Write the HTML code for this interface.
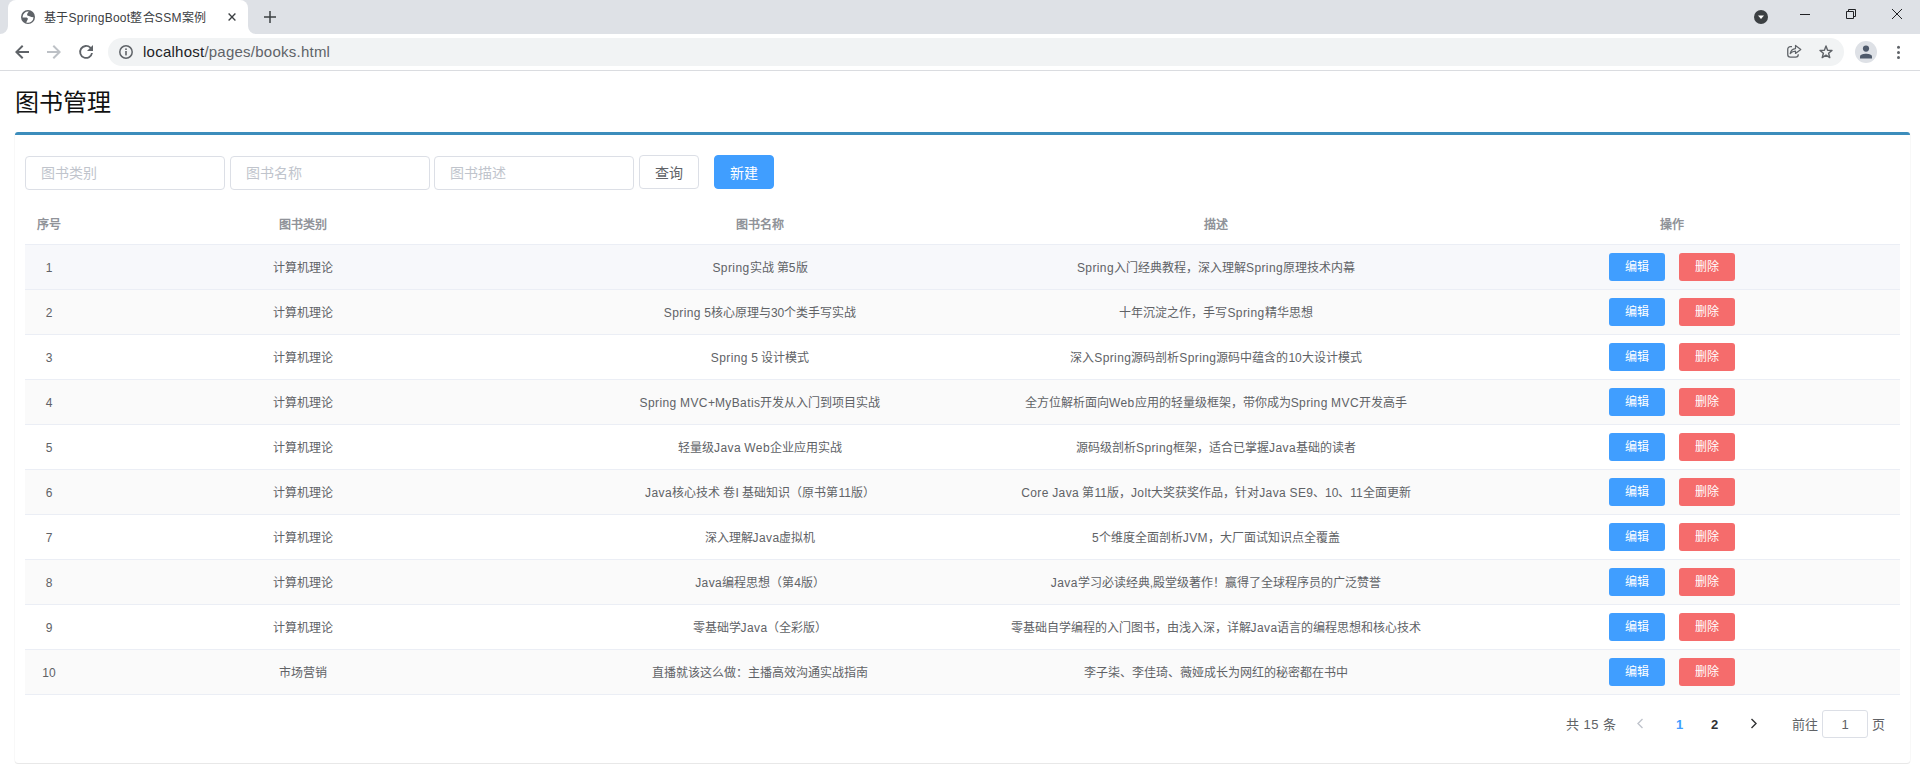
<!DOCTYPE html>
<html lang="zh-CN"><head><meta charset="utf-8">
<style>
*{box-sizing:border-box;margin:0;padding:0}
html,body{width:1920px;height:764px;overflow:hidden;background:#fff;font-family:"Liberation Sans",sans-serif;position:relative}
.abs{position:absolute}
#tabstrip{left:0;top:0;width:1920px;height:34px;background:#dee1e6}
#tab{left:8px;top:0;width:240px;height:34px;background:#fff;border-radius:8px 8px 0 0}
#tabtitle{left:44px;top:10px;font-size:12px;line-height:16px;color:#3c4043;white-space:nowrap;letter-spacing:.25px}
#toolbar{left:0;top:34px;width:1920px;height:36px;background:#fff}
#tbline{left:0;top:70px;width:1920px;height:1px;background:#dadce0}
#omni{left:108px;top:38px;width:1736px;height:28px;background:#f1f3f4;border-radius:14px}
#url{left:143px;top:43px;font-size:15px;line-height:18px;color:#202124;white-space:nowrap;letter-spacing:.24px}
#url span{color:#5f6368}
svg{position:absolute;overflow:visible}

#h1{left:15px;top:87px;font-size:24px;line-height:32px;color:#111;white-space:nowrap}
#box{left:15px;top:132px;width:1895px;height:631px;background:#fff;border-top:3px solid #3c8dbc;border-radius:3px;box-shadow:0 1px 1px rgba(0,0,0,.1), -1px 0 0 rgba(0,0,0,.02), 1px 0 0 rgba(0,0,0,.02)}
.inp{height:34px;width:200px;border:1px solid #dcdfe6;border-radius:4px;top:156px;background:#fff}
.ph{position:absolute;left:15px;top:8px;font-size:14px;line-height:16px;color:#c0c4cc;white-space:nowrap}
.btn{top:155px;height:34px;width:60px;border-radius:4px;font-size:14px;line-height:34px;text-align:center}
.th,.td{position:absolute;font-size:12px;line-height:16px;white-space:nowrap;transform:translateX(-50%)}
.th{color:#909399;font-weight:bold}
.td{color:#606266}
.row{left:25px;width:1875px;height:45px;border-bottom:1px solid #ebeef5}
.mb{position:absolute;top:8px;width:56px;height:28px;border-radius:3px;color:#fff;font-size:12px;line-height:28px;text-align:center}
.l{letter-spacing:.4px}
.pg{position:absolute;font-size:13px;line-height:16px;white-space:nowrap}
</style></head><body>
<!-- browser chrome -->
<div id="tabstrip" class="abs"></div>
<div id="tab" class="abs"></div>
<svg style="left:0;top:26px" width="8" height="8"><path d="M0 8 A8 8 0 0 0 8 0 L8 8 Z" fill="#fff"/></svg>
<svg style="left:248px;top:26px" width="8" height="8"><path d="M0 0 A8 8 0 0 0 8 8 L0 8 Z" fill="#fff"/></svg>
<svg style="left:21px;top:10px" width="14" height="14" viewBox="0 0 14 14"><circle cx="7" cy="7" r="7" fill="#5f6368"/><path d="M1.6 7 A5.5 5.5 0 0 1 7.8 1.6 L6.1 4 L6.3 5.4 L8.6 6.3 L10.3 7 L12.5 7.2 A5.5 5.5 0 0 1 5.2 12.4 L6.3 10.3 L7 8.8 L5.8 7.6 L1.6 7.5 Z" fill="#fff"/></svg>
<div id="tabtitle" class="abs">基于SpringBoot整合SSM案例</div>
<svg style="left:228px;top:13px" width="8" height="8"><path d="M0.6 0.6 L7.4 7.4 M7.4 0.6 L0.6 7.4" stroke="#3c4043" stroke-width="1.35"/></svg>
<svg style="left:264px;top:11px" width="12" height="12"><path d="M6 0 V12 M0 6 H12" stroke="#3c4043" stroke-width="1.5"/></svg>
<svg style="left:1754px;top:10px" width="14" height="14"><circle cx="7" cy="7" r="7" fill="#3c4043"/><path d="M4 5.5 H10 L7 9 Z" fill="#fff"/></svg>
<svg style="left:1800px;top:14px" width="10" height="1"><rect width="10" height="1" fill="#202124"/></svg>
<svg style="left:1846px;top:9px" width="10" height="10"><path d="M2.5 2 V0.5 H9.5 V7.5 H8 M0.5 2.5 H7.5 V9.5 H0.5 Z" stroke="#202124" stroke-width="1" fill="none"/></svg>
<svg style="left:1892px;top:9px" width="10" height="10"><path d="M0 0 L10 10 M10 0 L0 10" stroke="#202124" stroke-width="1"/></svg>

<div id="toolbar" class="abs"></div>
<div id="tbline" class="abs"></div>
<svg style="left:15px;top:45px" width="14" height="14" viewBox="0 0 14 14"><path d="M14 6 H3.8 L8.4 1.4 L7 0 L0 7 L7 14 L8.4 12.6 L3.8 8 H14 Z" fill="#5f6368"/></svg>
<svg style="left:47px;top:45px" width="14" height="14" viewBox="0 0 14 14"><path d="M0 6 H10.2 L5.6 1.4 L7 0 L14 7 L7 14 L5.6 12.6 L10.2 8 H0 Z" fill="#bdc1c6"/></svg>
<svg style="left:79px;top:45px" width="14" height="14" viewBox="0 0 14 14"><path d="M12 2.05 A6.9 6.9 0 1 0 13.9 8 H12.1 A5.1 5.1 0 1 1 10.7 3.35 L8 6 H14 V0 Z" fill="#5f6368"/></svg>
<div id="omni" class="abs"></div>
<svg style="left:119px;top:45px" width="14" height="14" viewBox="0 0 14 14"><circle cx="7" cy="7" r="6.2" stroke="#5f6368" stroke-width="1.5" fill="none"/><rect x="6.2" y="6" width="1.6" height="4.4" fill="#5f6368"/><rect x="6.2" y="3.4" width="1.6" height="1.6" fill="#5f6368"/></svg>
<div id="url" class="abs">localhost<span>/pages/books.html</span></div>
<svg style="left:1780px;top:40px" width="24" height="24" viewBox="0 0 24 24"><path d="M12 6.65 H10.35 A2.6 2.6 0 0 0 7.75 9.25 V14.55 A2.6 2.6 0 0 0 10.35 17.15 H15.65 A2.6 2.6 0 0 0 18.25 14.55 V14.2" stroke="#5f6368" stroke-width="1.3" fill="none"/><path d="M10.2 13.6 C10.8 10.6 12.6 8.9 15.5 8.6 V5.4 L20.8 9.4 L15.5 13.4 V11.2 C13.4 11.2 11.7 12 10.2 13.6 Z" stroke="#5f6368" stroke-width="1.2" fill="none" stroke-linejoin="round"/></svg>
<svg style="left:1819px;top:45px" width="14" height="14" viewBox="0 0 14 14"><path d="M7 1 L8.6 5.2 L13 5.4 L9.6 8.2 L10.8 12.6 L7 10.1 L3.2 12.6 L4.4 8.2 L1 5.4 L5.4 5.2 Z" stroke="#5f6368" stroke-width="1.4" fill="none" stroke-linejoin="round"/></svg>
<svg style="left:1855px;top:41px" width="22" height="22"><circle cx="11" cy="11" r="11" fill="#dee1e6"/><circle cx="11" cy="7.6" r="3.1" fill="#4f5a6b"/><path d="M5 17.5 V15.6 C5 13.6 8.5 12.8 11 12.8 C13.5 12.8 17 13.6 17 15.6 V17.5 Z" fill="#4f5a6b"/></svg>
<svg style="left:1896px;top:45px" width="5" height="15"><circle cx="2.5" cy="2.3" r="1.5" fill="#5f6368"/><circle cx="2.5" cy="7.5" r="1.5" fill="#5f6368"/><circle cx="2.5" cy="12.5" r="1.5" fill="#5f6368"/></svg>

<!-- page -->
<div id="h1" class="abs">图书管理</div>
<div id="box" class="abs"></div>
<div class="abs inp" style="left:25px"><span class="ph">图书类别</span></div>
<div class="abs inp" style="left:230px"><span class="ph">图书名称</span></div>
<div class="abs inp" style="left:434px"><span class="ph">图书描述</span></div>
<div class="abs btn" style="left:639px;border:1px solid #dcdfe6;color:#606266;background:#fff">查询</div>
<div class="abs btn" style="left:714px;border:1px solid #409eff;color:#fff;background:#409eff">新建</div>

<div id="table" class="abs" style="left:0;top:0">
<div class="abs row" style="top:200px;"></div>
<div class="th" style="left:49px;top:217px">序号</div>
<div class="th" style="left:302.5px;top:217px">图书类别</div>
<div class="th" style="left:760px;top:217px">图书名称</div>
<div class="th" style="left:1216px;top:217px">描述</div>
<div class="th" style="left:1672px;top:217px">操作</div>
</div>
<!--ROWS-->
<div class="abs row" style="top:245px;background:#f7f8fb"></div>
<div class="td" style="left:49px;top:260px">1</div>
<div class="td" style="left:302.5px;top:260px">计算机理论</div>
<div class="td" style="left:760px;top:260px"><span class="l">Spring</span>实战 第5版</div>
<div class="td" style="left:1216px;top:260px"><span class="l">Spring</span>入门经典教程，深入理解<span class="l">Spring</span>原理技术内幕</div>
<div class="mb" style="left:1609px;top:253px;background:#409eff">编辑</div>
<div class="mb" style="left:1679px;top:253px;background:#f56c6c">删除</div>
<div class="abs row" style="top:290px;background:#fafafa"></div>
<div class="td" style="left:49px;top:305px">2</div>
<div class="td" style="left:302.5px;top:305px">计算机理论</div>
<div class="td" style="left:760px;top:305px"><span class="l">Spring</span> 5核心原理与30个类手写实战</div>
<div class="td" style="left:1216px;top:305px">十年沉淀之作，手写<span class="l">Spring</span>精华思想</div>
<div class="mb" style="left:1609px;top:298px;background:#409eff">编辑</div>
<div class="mb" style="left:1679px;top:298px;background:#f56c6c">删除</div>
<div class="abs row" style="top:335px;background:#fff"></div>
<div class="td" style="left:49px;top:350px">3</div>
<div class="td" style="left:302.5px;top:350px">计算机理论</div>
<div class="td" style="left:760px;top:350px"><span class="l">Spring</span> 5 设计模式</div>
<div class="td" style="left:1216px;top:350px">深入<span class="l">Spring</span>源码剖析<span class="l">Spring</span>源码中蕴含的10大设计模式</div>
<div class="mb" style="left:1609px;top:343px;background:#409eff">编辑</div>
<div class="mb" style="left:1679px;top:343px;background:#f56c6c">删除</div>
<div class="abs row" style="top:380px;background:#fafafa"></div>
<div class="td" style="left:49px;top:395px">4</div>
<div class="td" style="left:302.5px;top:395px">计算机理论</div>
<div class="td" style="left:760px;top:395px"><span class="l">Spring</span> <span class="l">MVC</span>+<span class="l">MyBatis</span>开发从入门到项目实战</div>
<div class="td" style="left:1216px;top:395px">全方位解析面向<span class="l">Web</span>应用的轻量级框架，带你成为<span class="l">Spring</span> <span class="l">MVC</span>开发高手</div>
<div class="mb" style="left:1609px;top:388px;background:#409eff">编辑</div>
<div class="mb" style="left:1679px;top:388px;background:#f56c6c">删除</div>
<div class="abs row" style="top:425px;background:#fff"></div>
<div class="td" style="left:49px;top:440px">5</div>
<div class="td" style="left:302.5px;top:440px">计算机理论</div>
<div class="td" style="left:760px;top:440px">轻量级<span class="l">Java</span> <span class="l">Web</span>企业应用实战</div>
<div class="td" style="left:1216px;top:440px">源码级剖析<span class="l">Spring</span>框架，适合已掌握<span class="l">Java</span>基础的读者</div>
<div class="mb" style="left:1609px;top:433px;background:#409eff">编辑</div>
<div class="mb" style="left:1679px;top:433px;background:#f56c6c">删除</div>
<div class="abs row" style="top:470px;background:#fafafa"></div>
<div class="td" style="left:49px;top:485px">6</div>
<div class="td" style="left:302.5px;top:485px">计算机理论</div>
<div class="td" style="left:760px;top:485px"><span class="l">Java</span>核心技术 卷<span class="l">I</span> 基础知识（原书第11版）</div>
<div class="td" style="left:1216px;top:485px"><span class="l">Core</span> <span class="l">Java</span> 第11版，<span class="l">Jolt</span>大奖获奖作品，针对<span class="l">Java</span> <span class="l">SE</span>9、10、11全面更新</div>
<div class="mb" style="left:1609px;top:478px;background:#409eff">编辑</div>
<div class="mb" style="left:1679px;top:478px;background:#f56c6c">删除</div>
<div class="abs row" style="top:515px;background:#fff"></div>
<div class="td" style="left:49px;top:530px">7</div>
<div class="td" style="left:302.5px;top:530px">计算机理论</div>
<div class="td" style="left:760px;top:530px">深入理解<span class="l">Java</span>虚拟机</div>
<div class="td" style="left:1216px;top:530px">5个维度全面剖析<span class="l">JVM</span>，大厂面试知识点全覆盖</div>
<div class="mb" style="left:1609px;top:523px;background:#409eff">编辑</div>
<div class="mb" style="left:1679px;top:523px;background:#f56c6c">删除</div>
<div class="abs row" style="top:560px;background:#fafafa"></div>
<div class="td" style="left:49px;top:575px">8</div>
<div class="td" style="left:302.5px;top:575px">计算机理论</div>
<div class="td" style="left:760px;top:575px"><span class="l">Java</span>编程思想（第4版）</div>
<div class="td" style="left:1216px;top:575px"><span class="l">Java</span>学习必读经典,殿堂级著作！赢得了全球程序员的广泛赞誉</div>
<div class="mb" style="left:1609px;top:568px;background:#409eff">编辑</div>
<div class="mb" style="left:1679px;top:568px;background:#f56c6c">删除</div>
<div class="abs row" style="top:605px;background:#fff"></div>
<div class="td" style="left:49px;top:620px">9</div>
<div class="td" style="left:302.5px;top:620px">计算机理论</div>
<div class="td" style="left:760px;top:620px">零基础学<span class="l">Java</span>（全彩版）</div>
<div class="td" style="left:1216px;top:620px">零基础自学编程的入门图书，由浅入深，详解<span class="l">Java</span>语言的编程思想和核心技术</div>
<div class="mb" style="left:1609px;top:613px;background:#409eff">编辑</div>
<div class="mb" style="left:1679px;top:613px;background:#f56c6c">删除</div>
<div class="abs row" style="top:650px;background:#fafafa"></div>
<div class="td" style="left:49px;top:665px">10</div>
<div class="td" style="left:302.5px;top:665px">市场营销</div>
<div class="td" style="left:760px;top:665px">直播就该这么做：主播高效沟通实战指南</div>
<div class="td" style="left:1216px;top:665px">李子柒、李佳琦、薇娅成长为网红的秘密都在书中</div>
<div class="mb" style="left:1609px;top:658px;background:#409eff">编辑</div>
<div class="mb" style="left:1679px;top:658px;background:#f56c6c">删除</div>
<!--/ROWS-->

<!-- pagination -->
<div class="pg" style="left:1566px;top:717px;color:#606266;letter-spacing:.45px">共 15 条</div>
<svg style="left:1636px;top:718px" width="8" height="11"><path d="M6.5 1 L2 5.5 L6.5 10" stroke="#c0c4cc" stroke-width="1.4" fill="none"/></svg>
<div class="pg" style="left:1676px;top:717px;color:#409eff;font-weight:bold">1</div>
<div class="pg" style="left:1711px;top:717px;color:#303133;font-weight:bold">2</div>
<svg style="left:1750px;top:718px" width="8" height="11"><path d="M1.5 1 L6 5.5 L1.5 10" stroke="#303133" stroke-width="1.4" fill="none"/></svg>
<div class="pg" style="left:1792px;top:717px;color:#606266">前往</div>
<div class="abs" style="left:1822px;top:710px;width:46px;height:28px;border:1px solid #dcdfe6;border-radius:3px;font-size:13px;line-height:27px;text-align:center;color:#606266">1</div>
<div class="pg" style="left:1872px;top:717px;color:#606266">页</div>
</body></html>
